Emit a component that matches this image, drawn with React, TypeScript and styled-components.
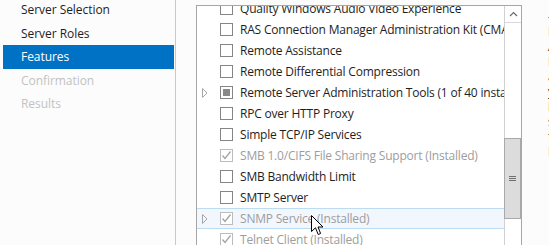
import React from 'react';
import styled, { createGlobalStyle } from 'styled-components';

const GlobalStyle = createGlobalStyle`
    html, body {
        margin: 0;
        padding: 0;
        background: #fcfcfc;
        overflow: hidden;
    }
    * {
        box-sizing: border-box;
    }
`;

type CheckState = 'off' | 'on' | 'mixed';

interface Feature {
    name: string;
    state: CheckState;
    installed?: boolean;
    expandable?: boolean;
    hovered?: boolean;
}

const features: Feature[] = [
    { name: 'Quality Windows Audio Video Experience', state: 'off' },
    { name: 'RAS Connection Manager Administration Kit (CMAK)', state: 'off' },
    { name: 'Remote Assistance', state: 'off' },
    { name: 'Remote Differential Compression', state: 'off' },
    { name: 'Remote Server Administration Tools (1 of 40 installed)', state: 'mixed', expandable: true },
    { name: 'RPC over HTTP Proxy', state: 'off' },
    { name: 'Simple TCP/IP Services', state: 'off' },
    { name: 'SMB 1.0/CIFS File Sharing Support (Installed)', state: 'on', installed: true },
    { name: 'SMB Bandwidth Limit', state: 'off' },
    { name: 'SMTP Server', state: 'off' },
    { name: 'SNMP Service (Installed)', state: 'on', installed: true, expandable: true, hovered: true },
    { name: 'Telnet Client (Installed)', state: 'on', installed: true },
    { name: 'Telnet Server', state: 'off' },
];

const navItems = [
    { label: 'Server Selection', kind: 'normal' },
    { label: 'Server Roles', kind: 'normal' },
    { label: 'Features', kind: 'active' },
    { label: 'Confirmation', kind: 'disabled' },
    { label: 'Results', kind: 'disabled' },
];

// the description pane is scrolled almost out of view; only first letters show
const descLines = ['-', 'Protocol', 'Agents', 'Features', 'and', 'your', 'in', 'such', 'for', 'Events'];

const Page = styled.div`
    display: flex;
    width: 549px;
    height: 245px;
    overflow: hidden;
    position: relative;
    font-family: "Segoe UI", "Open Sans", "Noto Sans", sans-serif;
    font-size: 12px;
    color: #1e1e1e;
    background: #fcfcfc;
`;

const Nav = styled.div`
    flex: 0 0 176px;
    border-right: 1px solid #c9c9c9;
    padding: 0 1px 0 3px;
    margin-top: -2px;
    height: calc(100% + 2px);
`;

const NavItem = styled.div<{ $kind: string }>`
    height: 23.5px;
    line-height: 23px;
    padding-left: 18px;
    white-space: nowrap;
    letter-spacing: -0.05px;
    background: ${p => (p.$kind === 'active' ? '#0072c6' : 'transparent')};
    color: ${p => (p.$kind === 'active' ? '#ffffff' : p.$kind === 'disabled' ? '#c2c2c2' : '#1e1e1e')};
`;

const ListBox = styled.div`
    flex: 0 0 326px;
    width: 326px;
    min-width: 0;
    overflow: hidden;
    margin: 5px 0 0 20px;
    height: 260px;
    border: 1px solid #a6a6a6;
    background: #ffffff;
    display: flex;
`;

const ListContent = styled.div`
    flex: 1;
    overflow: hidden;
    min-width: 0;
`;

const ListInner = styled.div`
    margin-top: -8px;
`;

const Row = styled.div<{ $hovered?: boolean }>`
    display: flex;
    align-items: center;
    height: 21px;
    padding-left: 4px;
    white-space: nowrap;
    background: ${p => (p.$hovered ? '#f1f7fd' : 'transparent')};
    border-top: 1px solid ${p => (p.$hovered ? '#bcdcf4' : 'transparent')};
    border-bottom: 1px solid ${p => (p.$hovered ? '#bcdcf4' : 'transparent')};
`;

const Expander = styled.div`
    flex: 0 0 19px;
    height: 19px;
    display: flex;
    align-items: center;
`;

const Box = styled.div<{ $disabled?: boolean }>`
    flex: 0 0 13px;
    width: 13px;
    height: 13px;
    border: 1px solid ${p => (p.$disabled ? '#bcbcbc' : '#858585')};
    background: #ffffff;
    display: flex;
    align-items: center;
    justify-content: center;
`;

const MixedFill = styled.div`
    width: 7px;
    height: 7px;
    background: #8a8a8a;
`;

const Label = styled.span<{ $disabled?: boolean }>`
    margin-left: 7px;
    letter-spacing: -0.2px;
    color: ${p => (p.$disabled ? '#9d9d9d' : '#1e1e1e')};
`;

const ScrollBar = styled.div`
    flex: 0 0 17px;
    border-left: 1px solid #d2d2d2;
    background: #ffffff;
    display: flex;
    flex-direction: column;
`;

const ScrollArrow = styled.div`
    height: 17px;
    border-bottom: 1px solid #d9d9d9;
    display: flex;
    align-items: center;
    justify-content: center;
`;

const ScrollTrack = styled.div`
    flex: 1;
    padding-top: 115px;
`;

const Thumb = styled.div`
    height: 81px;
    margin-left: -1px;
    background: #dcdcdc;
    border: 1px solid #a9a9a9;
    display: flex;
    flex-direction: column;
    align-items: center;
    justify-content: center;
    gap: 1px;
`;

const Grip = styled.div`
    width: 7px;
    height: 1px;
    background: #6f6f6f;
`;

const Description = styled.div`
    flex: 0 0 auto;
    margin-left: 26px;
    padding-top: 9px;
    line-height: 15px;
    white-space: nowrap;
    color: #1e1e1e;
`;

const Cursor = styled.svg`
    position: absolute;
    left: 311px;
    top: 215px;
`;

const Triangle = () => (
    <svg width="7" height="10" viewBox="0 0 7 10">
        <path d="M1.5 0.5 L6 5 L1.5 9.5 Z" fill="none" stroke="#a6a6a6" strokeWidth="1" />
    </svg>
);

const Check = () => (
    <svg width="11" height="11" viewBox="0 0 11 11">
        <path d="M1.5 5.5 L4 8.5 L9.5 1.5" fill="none" stroke="#a3a3a3" strokeWidth="1.3" />
    </svg>
);

const App = () => (
    <>
        <GlobalStyle />
        <Page>
            <Nav>
                {navItems.map(item => (
                    <NavItem key={item.label} $kind={item.kind}>{item.label}</NavItem>
                ))}
            </Nav>
            <ListBox>
                <ListContent>
                    <ListInner>
                        {features.map(f => (
                            <Row key={f.name} $hovered={f.hovered}>
                                <Expander>{f.expandable && <Triangle />}</Expander>
                                <Box $disabled={f.installed}>
                                    {f.state === 'on' && <Check />}
                                    {f.state === 'mixed' && <MixedFill />}
                                </Box>
                                <Label $disabled={f.installed}>{f.name}</Label>
                            </Row>
                        ))}
                    </ListInner>
                </ListContent>
                <ScrollBar>
                    <ScrollArrow>
                        <svg width="9" height="6" viewBox="0 0 9 6">
                            <path d="M1 5 L4.5 1.5 L8 5" fill="none" stroke="#6a6a6a" strokeWidth="1.2" />
                        </svg>
                    </ScrollArrow>
                    <ScrollTrack>
                        <Thumb>
                            <Grip />
                            <Grip />
                            <Grip />
                        </Thumb>
                    </ScrollTrack>
                </ScrollBar>
            </ListBox>
            <Description>
                {descLines.map((l, i) => (
                    <div key={i}>{l}</div>
                ))}
            </Description>
            <Cursor width="13" height="21" viewBox="0 0 13 21">
                <path d="M0.5 0.5 L0.5 16.5 L4.5 12.8 L7.2 19.5 L9.6 18.5 L7 12 L12 12 Z" fill="#ffffff" stroke="#000000" strokeWidth="1" />
            </Cursor>
        </Page>
    </>
);

export default App;
